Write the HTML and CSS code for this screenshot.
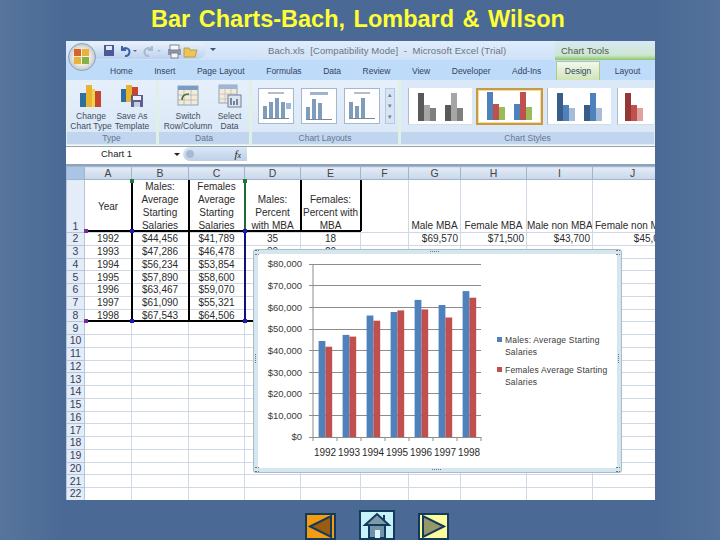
FILE: index.html
```html
<!DOCTYPE html>
<html lang="en">
<head>
    <meta charset="UTF-8">
    <meta name="viewport" content="width=device-width, initial-scale=1.0">
    <title>Bar Charts-Bach, Lombard &amp; Wilson</title>
    <link rel="stylesheet" href="styles.css">
</head>
<body>
    <h1 class="slide-title">Bar Charts-Bach, Lombard &amp; Wilson</h1>

    <div class="excel">
        <!-- title bar -->
        <div class="titlebar">
            <div class="office-btn">
                <svg width="18" height="18" viewBox="0 0 18 18">
                    <rect x="1" y="1" width="7" height="7" fill="#d9622b"/>
                    <rect x="9" y="1" width="7" height="7" fill="#e9b23c"/>
                    <rect x="1" y="9" width="7" height="7" fill="#e9b23c"/>
                    <rect x="9" y="9" width="7" height="7" fill="#86b04a"/>
                </svg>
            </div>
            <div class="qat">
                <svg width="100" height="16" viewBox="0 0 100 16">
                    <rect x="4" y="2" width="10" height="11" fill="#4a5a94"/>
                    <rect x="6" y="3" width="6" height="4" fill="#dfe6f5"/>
                    <path d="M22 7 a4 4 0 1 1 3 6 M22 3 v4 h4" fill="none" stroke="#3b62a8" stroke-width="2"/>
                    <path d="M33 7 h4 l-2 2 z" fill="#5a6a85"/>
                    <path d="M52 7 a4 4 0 1 0 -3 6 M52 3 v4 h-4" fill="none" stroke="#a9bad0" stroke-width="2"/>
                    <path d="M57 7 h4 l-2 2 z" fill="#a9bad0"/>
                    <rect x="68" y="6" width="13" height="6" fill="#8f98a6"/>
                    <rect x="70" y="2" width="9" height="5" fill="#f4f6fa" stroke="#69717f" stroke-width=".8"/>
                    <rect x="71" y="10" width="7" height="5" fill="#f4f6fa" stroke="#69717f" stroke-width=".8"/>
                    <path d="M84 5 h5 l1 2 h7 l-2 7 h-11 z" fill="#ecc55a" stroke="#b68f30" stroke-width=".8"/>
                </svg>
            </div>
            <span class="qat-more"></span>
            <span class="doc-name">Bach.xls&nbsp; [Compatibility Mode]&nbsp; -&nbsp; Microsoft Excel (Trial)</span>
            <span class="chart-tools">Chart Tools</span>
        </div>

        <!-- tabs -->
        <div class="tabs">
            <span>Home</span>
            <span>Insert</span>
            <span>Page Layout</span>
            <span>Formulas</span>
            <span>Data</span>
            <span>Review</span>
            <span>View</span>
            <span>Developer</span>
            <span>Add-Ins</span>
            <span class="tab-active">Design</span>
            <span>Layout</span>
        </div>

        <!-- ribbon -->
        <div class="ribbon">
            <section class="group group-type">
                <div class="group-body">
                    <div class="tool">
                        <svg width="24" height="24" viewBox="0 0 24 24">
                            <rect x="1" y="9" width="6" height="14" fill="#2f6f9e"/>
                            <rect x="7" y="1" width="6" height="22" fill="#e8b32f"/>
                            <rect x="13" y="5" width="3" height="18" fill="#f0d34a"/>
                            <rect x="16" y="7" width="6" height="16" fill="#c5452e"/>
                        </svg>
                        <span>Change<br>Chart Type</span>
                    </div>
                    <div class="tool">
                        <svg width="24" height="24" viewBox="0 0 24 24">
                            <rect x="1" y="5" width="5" height="13" fill="#2f6f9e"/>
                            <rect x="6" y="1" width="6" height="17" fill="#e8b32f"/>
                            <rect x="12" y="3" width="6" height="15" fill="#c5452e"/>
                            <rect x="11" y="11" width="12" height="12" fill="#5b5f93"/>
                            <rect x="13" y="12" width="8" height="4" fill="#eef1f8"/>
                            <rect x="14" y="18" width="6" height="5" fill="#c9cde0"/>
                        </svg>
                        <span>Save As<br>Template</span>
                    </div>
                </div>
                <div class="group-label">Type</div>
            </section>
            <section class="group group-data">
                <div class="group-body data-body">
                    <div class="tool tool-wide">
                        <svg width="24" height="24" viewBox="0 0 24 24">
                            <rect x="2" y="2" width="20" height="19" fill="#f6ead2" stroke="#8fa3bd"/>
                            <rect x="2" y="2" width="20" height="4" fill="#7c9cc6"/>
                            <path d="M2 11 h20 M2 16 h20 M8 6 v15 M15 6 v15" stroke="#a9b7c8" stroke-width=".8"/>
                            <path d="M6 16 q0 -6 7 -6" fill="none" stroke="#3f6b3a" stroke-width="1.6"/>
                        </svg>
                        <span>Switch<br>Row/Column</span>
                    </div>
                    <div class="tool">
                        <svg width="24" height="24" viewBox="0 0 24 24">
                            <rect x="1" y="1" width="18" height="18" fill="#f6ead2" stroke="#8fa3bd"/>
                            <rect x="1" y="1" width="18" height="4" fill="#9db6d8"/>
                            <path d="M1 10 h18 M1 15 h18 M7 5 v14 M13 5 v14" stroke="#b4c0cf" stroke-width=".8"/>
                            <rect x="10" y="11" width="13" height="12" fill="#dbe5f1" stroke="#6f7f95"/>
                            <path d="M13 21 v-7 M16 21 v-4 M19 21 v-6" stroke="#44546a" stroke-width="1.3"/>
                        </svg>
                        <span>Select<br>Data</span>
                    </div>
                </div>
                <div class="group-label">Data</div>
            </section>
            <section class="group group-layouts">
                <div class="group-body layouts-body">
                    <div class="layout-thumb">
                        <i class="lt-title"></i>
                        <div class="lt-bars"><b class="h1"></b><b class="h2"></b><b class="h3"></b><b class="h2"></b></div>
                        <i class="lt-key"></i>
                    </div>
                    <div class="layout-thumb">
                        <i class="lt-title lt-title-box"></i>
                        <div class="lt-bars"><b class="h1"></b><b class="h3"></b><b class="h2"></b></div>
                    </div>
                    <div class="layout-thumb">
                        <i class="lt-title"></i>
                        <div class="lt-bars"><b class="h2"></b><b class="h1"></b><b class="h3"></b></div>
                    </div>
                    <div class="scroller"><i>&#9652;</i><i>&#9662;</i><i>&#9662;</i></div>
                </div>
                <div class="group-label">Chart Layouts</div>
            </section>
            <section class="group group-styles">
                <div class="group-body styles-body">
                    <div class="style-thumb">
                        <div class="cluster"><b class="tall c-g1"></b><b class="mid c-g2"></b><b class="low c-g3"></b></div>
                        <div class="cluster"><b class="mid c-g1"></b><b class="tall c-g2"></b><b class="low c-g3"></b></div>
                    </div>
                    <div class="style-thumb style-picked">
                        <div class="cluster"><b class="tall c-b"></b><b class="mid c-r"></b><b class="low c-n"></b></div>
                        <div class="cluster"><b class="mid c-b"></b><b class="tall c-r"></b><b class="low c-n"></b></div>
                    </div>
                    <div class="style-thumb">
                        <div class="cluster"><b class="tall c-b1"></b><b class="mid c-b2"></b><b class="low c-b3"></b></div>
                        <div class="cluster"><b class="mid c-b1"></b><b class="tall c-b2"></b><b class="low c-b3"></b></div>
                    </div>
                    <div class="style-thumb style-cut">
                        <div class="cluster"><b class="tall c-r1"></b><b class="mid c-r2"></b><b class="low c-r3"></b></div>
                    </div>
                </div>
                <div class="group-label">Chart Styles</div>
            </section>
        </div>

        <!-- name box and formula bar -->
        <div class="formula-bar">
            <div class="name-box">Chart 1<span class="caret"></span></div>
            <div class="fx-box"><i class="fx-knob"></i><em>f<small>x</small></em></div>
        </div>

        <!-- worksheet -->
        <div class="sheet">
            <table class="grid">
                <colgroup>
                    <col class="w-head"><col class="w-a"><col class="w-b"><col class="w-c"><col class="w-d"><col class="w-e">
                    <col class="w-f"><col class="w-g"><col class="w-h"><col class="w-i"><col class="w-j">
                </colgroup>
                <thead>
                    <tr>
                        <th class="corner"></th><th>A</th><th>B</th><th>C</th><th>D</th><th>E</th><th>F</th><th>G</th><th>H</th><th>I</th><th>J</th>
                    </tr>
                </thead>
                <tbody>
                    <tr class="row-tall">
                        <th class="row-num">1</th>
                        <td class="year-head">Year</td>
                        <td class="wrap">Males:<br>Average<br>Starting<br>Salaries</td>
                        <td class="wrap">Females<br>Average<br>Starting<br>Salaries</td>
                        <td class="wrap">Males:<br>Percent<br>with MBA</td>
                        <td class="wrap">Females:<br>Percent with<br>MBA</td>
                        <td></td>
                        <td class="wrap">Male MBA</td>
                        <td class="wrap">Female MBA</td>
                        <td class="wrap">Male non MBA</td>
                        <td class="wrap spill">Female non MBA</td>
                    </tr>
                    <tr><th class="row-num">2</th><td>1992</td><td>$44,456</td><td>$41,789</td><td>35</td><td>18</td><td></td><td class="money">$69,570</td><td class="money">$71,500</td><td class="money">$43,700</td><td class="money">$45,000</td></tr>
                    <tr><th class="row-num">3</th><td>1993</td><td>$47,286</td><td>$46,478</td><td>39</td><td>20</td><td></td><td></td><td></td><td></td><td></td></tr>
                    <tr><th class="row-num">4</th><td>1994</td><td>$56,234</td><td>$53,854</td><td></td><td></td><td></td><td></td><td></td><td></td><td></td></tr>
                    <tr><th class="row-num">5</th><td>1995</td><td>$57,890</td><td>$58,600</td><td></td><td></td><td></td><td></td><td></td><td></td><td></td></tr>
                    <tr><th class="row-num">6</th><td>1996</td><td>$63,467</td><td>$59,070</td><td></td><td></td><td></td><td></td><td></td><td></td><td></td></tr>
                    <tr><th class="row-num">7</th><td>1997</td><td>$61,090</td><td>$55,321</td><td></td><td></td><td></td><td></td><td></td><td></td><td></td></tr>
                    <tr><th class="row-num">8</th><td>1998</td><td>$67,543</td><td>$64,506</td><td></td><td></td><td></td><td></td><td></td><td></td><td></td></tr>
                    <tr><th class="row-num">9</th><td></td><td></td><td></td><td></td><td></td><td></td><td></td><td></td><td></td><td></td></tr>
                    <tr><th class="row-num">10</th><td></td><td></td><td></td><td></td><td></td><td></td><td></td><td></td><td></td><td></td></tr>
                    <tr><th class="row-num">11</th><td></td><td></td><td></td><td></td><td></td><td></td><td></td><td></td><td></td><td></td></tr>
                    <tr><th class="row-num">12</th><td></td><td></td><td></td><td></td><td></td><td></td><td></td><td></td><td></td><td></td></tr>
                    <tr><th class="row-num">13</th><td></td><td></td><td></td><td></td><td></td><td></td><td></td><td></td><td></td><td></td></tr>
                    <tr><th class="row-num">14</th><td></td><td></td><td></td><td></td><td></td><td></td><td></td><td></td><td></td><td></td></tr>
                    <tr><th class="row-num">15</th><td></td><td></td><td></td><td></td><td></td><td></td><td></td><td></td><td></td><td></td></tr>
                    <tr><th class="row-num">16</th><td></td><td></td><td></td><td></td><td></td><td></td><td></td><td></td><td></td><td></td></tr>
                    <tr><th class="row-num">17</th><td></td><td></td><td></td><td></td><td></td><td></td><td></td><td></td><td></td><td></td></tr>
                    <tr><th class="row-num">18</th><td></td><td></td><td></td><td></td><td></td><td></td><td></td><td></td><td></td><td></td></tr>
                    <tr><th class="row-num">19</th><td></td><td></td><td></td><td></td><td></td><td></td><td></td><td></td><td></td><td></td></tr>
                    <tr><th class="row-num">20</th><td></td><td></td><td></td><td></td><td></td><td></td><td></td><td></td><td></td><td></td></tr>
                    <tr><th class="row-num">21</th><td></td><td></td><td></td><td></td><td></td><td></td><td></td><td></td><td></td><td></td></tr>
                    <tr><th class="row-num">22</th><td></td><td></td><td></td><td></td><td></td><td></td><td></td><td></td><td></td><td></td></tr>
                </tbody>
            </table>

            <!-- selected ranges drawn over the cells -->
            <i class="line h row1-line"></i>
            <i class="line h row8-line"></i>
            <i class="line v col-b"></i>
            <i class="line v col-c"></i>
            <i class="line v col-d-top"></i>
            <i class="line v col-d-low"></i>
            <i class="line v col-e"></i>
            <i class="line v col-f"></i>
            <i class="handle purple hd-a2"></i>
            <i class="handle purple hd-a8"></i>
            <i class="handle navy hd-b2"></i>
            <i class="handle navy hd-b8"></i>
            <i class="handle navy hd-d2"></i>
            <i class="handle navy hd-d8"></i>
            <i class="handle green hd-b1"></i>
            <i class="handle green hd-d1"></i>

            <!-- embedded chart -->
            <div class="chart">
                <i class="grip grip-top"></i>
                <i class="grip grip-bottom"></i>
                <i class="grip grip-left"></i>
                <i class="grip grip-right"></i>
                <i class="grip grip-tl"></i>
                <i class="grip grip-tr"></i>
                <i class="grip grip-bl"></i>
                <i class="grip grip-br"></i>
                <svg class="chart-svg" viewBox="5 2 359 214" width="359" height="214">
                    <g stroke="#8c8c8c" stroke-width="1">
                        <path d="M60 12 V185"/>
                        <path d="M56 12.5 H228 M56 33.5 H228 M56 55.5 H228 M56 77.5 H228 M56 98.5 H228 M56 120.5 H228 M56 141.5 H228 M56 163.5 H228 M56 185.5 H228"/>
                        <path d="M60 185 v4 M84 185 v4 M108 185 v4 M132 185 v4 M156 185 v4 M180 185 v4 M204 185 v4 M228 185 v4"/>
                    </g>
                    <g class="bars-male" fill="#4f81bd">
                        <rect x="65.6" y="89" width="6.8" height="96"/>
                        <rect x="89.6" y="82.9" width="6.8" height="102.1"/>
                        <rect x="113.6" y="63.5" width="6.8" height="121.5"/>
                        <rect x="137.6" y="60" width="6.8" height="125"/>
                        <rect x="161.6" y="47.9" width="6.8" height="137.1"/>
                        <rect x="185.6" y="53" width="6.8" height="132"/>
                        <rect x="209.6" y="39.1" width="6.8" height="145.9"/>
                    </g>
                    <g class="bars-female" fill="#c0504d">
                        <rect x="72.4" y="94.7" width="6.8" height="90.3"/>
                        <rect x="96.4" y="84.6" width="6.8" height="100.4"/>
                        <rect x="120.4" y="68.7" width="6.8" height="116.3"/>
                        <rect x="144.4" y="58.4" width="6.8" height="126.6"/>
                        <rect x="168.4" y="57.4" width="6.8" height="127.6"/>
                        <rect x="192.4" y="65.5" width="6.8" height="119.5"/>
                        <rect x="216.4" y="45.7" width="6.8" height="139.3"/>
                    </g>
                    <g class="axis-y" text-anchor="end">
                        <text x="49" y="15">$80,000</text>
                        <text x="49" y="37">$70,000</text>
                        <text x="49" y="59">$60,000</text>
                        <text x="49" y="80">$50,000</text>
                        <text x="49" y="102">$40,000</text>
                        <text x="49" y="124">$30,000</text>
                        <text x="49" y="145">$20,000</text>
                        <text x="49" y="167">$10,000</text>
                        <text x="49" y="188">$0</text>
                    </g>
                    <g class="axis-x" text-anchor="middle">
                        <text x="72" y="204">1992</text>
                        <text x="96" y="204">1993</text>
                        <text x="120" y="204">1994</text>
                        <text x="144" y="204">1995</text>
                        <text x="168" y="204">1996</text>
                        <text x="192" y="204">1997</text>
                        <text x="216" y="204">1998</text>
                    </g>
                    <g class="legend">
                        <rect x="244" y="85" width="5" height="5" fill="#4f81bd"/>
                        <text x="252" y="91">Males: Average Starting</text>
                        <text x="252" y="103">Salaries</text>
                        <rect x="244" y="115" width="5" height="5" fill="#c0504d"/>
                        <text x="252" y="121">Females Average Starting</text>
                        <text x="252" y="133">Salaries</text>
                    </g>
                </svg>
            </div>
        </div>
    </div>

    <!-- slide navigation -->
    <nav class="slide-nav">
        <svg class="nav-btn" width="31" height="27" viewBox="0 0 31 27">
            <rect x="1" y="1" width="29" height="25" fill="#f59b12" stroke="#123a5c" stroke-width="2"/>
            <path d="M5 13.5 L26 3 V24 Z" fill="#9a5c10" stroke="#123a5c" stroke-width="2"/>
        </svg>
        <svg class="nav-btn" width="36" height="30" viewBox="0 0 36 30">
            <rect x="1" y="1" width="34" height="28" fill="#c8f2fb" stroke="#123a5c" stroke-width="2"/>
            <path d="M6 15 L18 4 L30 15 Z" fill="#7f9aa6" stroke="#123a5c" stroke-width="2"/>
            <rect x="24" y="5" width="2" height="5" fill="#123a5c"/>
            <path d="M10 15 H26 V28 H10 Z" fill="#6f94a8" stroke="#123a5c" stroke-width="2"/>
            <rect x="16" y="20" width="5" height="8" fill="#dff5fb"/>
        </svg>
        <svg class="nav-btn" width="31" height="27" viewBox="0 0 31 27">
            <rect x="1" y="1" width="29" height="25" fill="#fdfb9c" stroke="#123a5c" stroke-width="2"/>
            <path d="M26 13.5 L5 3 V24 Z" fill="#94986a" stroke="#123a5c" stroke-width="2"/>
        </svg>
    </nav>
</body>
</html>
```

FILE: styles.css
```css
html, body {
    margin: 0;
    height: 100%;
}
body {
    width: 720px;
    height: 540px;
    overflow: hidden;
    background: linear-gradient(90deg, rgba(255, 255, 255, .07), transparent 9%, transparent 91%, rgba(255, 255, 255, .05)), #4a6a95;
    font-family: "Liberation Sans", Arial, sans-serif;
}
.slide-title {
    margin: 0;
    height: 41px;
    line-height: 39px;
    padding-right: 4px;
    text-align: center;
    font-size: 23.5px;
    font-weight: bold;
    color: #ffff33;
    word-spacing: 2px;
}

/* excel window */
.excel {
    width: 589px;
    height: 459px;
    margin-left: 66px;
    background: #fff;
    color: #222;
    overflow: hidden;
}
.titlebar {
    display: flex;
    align-items: center;
    position: relative;
    height: 19px;
    background: linear-gradient(#dfedfc, #cfe1f7);
    font-size: 9.5px;
    color: #6b7483;
}
.office-btn {
    position: absolute;
    left: 2px;
    top: 2px;
    width: 28px;
    height: 28px;
    display: flex;
    align-items: center;
    justify-content: center;
    border-radius: 50%;
    background: radial-gradient(circle, #f5efe0 40%, #b8c2cf 80%, #8a97a8);
    border: 1px solid #8ea0b8;
    box-sizing: border-box;
    z-index: 2;
}
.qat {
    display: flex;
    align-items: center;
    height: 17px;
    margin-left: 24px;
    padding-left: 10px;
    padding-right: 6px;
    border-radius: 0 9px 9px 0;
    background: linear-gradient(#e9f1fb, #bcd2ee);
}
.qat-more {
    width: 0;
    height: 0;
    margin-left: 4px;
    border: 3px solid transparent;
    border-top-color: #44546a;
}
.doc-name {
    margin-left: 52px;
    white-space: nowrap;
    letter-spacing: .1px;
}
.chart-tools {
    position: absolute;
    left: 489px;
    top: 0;
    right: 0;
    height: 19px;
    padding-left: 6px;
    line-height: 19px;
    color: #4d5a4d;
    background: linear-gradient(#d8e9f6, #cde6cf 75%, #8fc46d);
}
.tabs {
    display: flex;
    align-items: flex-end;
    gap: 21.5px;
    height: 20px;
    padding-left: 44px;
    background: #bfdbfa;
    font-size: 8.5px;
    color: #33445c;
    white-space: nowrap;
}
.tabs span {
    line-height: 18px;
}
.tab-active {
    margin: 0 -7px;
    padding: 0 8px;
    border: 1px solid #a9c98f;
    border-bottom: 0;
    background: linear-gradient(#f2f8ec, #cfe5b8);
}

/* ribbon groups */
.ribbon {
    display: flex;
    gap: 3px;
    height: 64px;
    padding: 0 0 1px 1px;
    background: #e0f0e4;
    border-bottom: 1px solid #f4f8fd;
    font-size: 8.5px;
    color: #3f4d61;
}
.group {
    display: flex;
    flex-direction: column;
    border-radius: 3px;
    background: #dbe8f7;
}
.group-type { width: 89px; }
.group-data { width: 90px; }
.group-layouts { width: 146px; }
.group-styles { width: 253px; }
.group-body {
    flex: 1;
    display: flex;
    justify-content: center;
    gap: 1px;
    padding-top: 4px;
    background: linear-gradient(#e6f0fb, #dbe8f7);
}
.data-body {
    justify-content: flex-start;
    gap: 0;
    padding-left: 7px;
}
.group-label {
    height: 12px;
    line-height: 12px;
    text-align: center;
    font-size: 8.5px;
    color: #66758c;
    background: #c2d5ee;
}
.tool {
    width: 40px;
    display: flex;
    flex-direction: column;
    align-items: center;
    text-align: center;
    line-height: 10px;
    white-space: nowrap;
}
.tool svg {
    margin-bottom: 3px;
}
.tool-wide {
    width: 44px;
}
.layouts-body {
    justify-content: flex-start;
    gap: 7px;
    padding: 8px 0 4px 6px;
}
.layout-thumb {
    box-sizing: border-box;
    width: 36px;
    height: 36px;
    position: relative;
    padding: 3px 4px;
    border: 1px solid #a5b7ce;
    background: #fff;
}
.lt-title {
    display: block;
    width: 60%;
    height: 2px;
    margin: 0 auto 4px;
    background: #b6bdc7;
}
.lt-title-box {
    height: 3px;
    width: 70%;
    background: #9fb4cf;
}
.lt-bars {
    display: flex;
    align-items: flex-end;
    gap: 2px;
    height: 20px;
    border-bottom: 1px solid #7a8797;
}
.lt-bars b {
    width: 4px;
    background: #7f9cbd;
}
.lt-bars .h1 { height: 60%; }
.lt-bars .h2 { height: 80%; }
.lt-bars .h3 { height: 100%; }
.lt-key {
    position: absolute;
    right: 2px;
    top: 14px;
    width: 5px;
    height: 6px;
    background: #9fb8d6;
}
.scroller {
    display: flex;
    flex-direction: column;
    width: 10px;
    margin-left: -2px;
    height: 36px;
    border: 1px solid #b6c8df;
    box-sizing: border-box;
    background: #d6e4f5;
    font-size: 7px;
    line-height: 11px;
    text-align: center;
    color: #6d7f97;
}
.scroller i {
    font-style: normal;
}

/* chart style gallery */
.styles-body {
    justify-content: flex-start;
    gap: 4px;
    padding: 8px 0 4px 7px;
    box-sizing: border-box;
    background: #dbe8f7;
}
.style-thumb {
    box-sizing: border-box;
    display: flex;
    justify-content: space-around;
    align-items: flex-end;
    width: 64px;
    height: 37px;
    padding: 0 4px 3px;
    background: #fff;
    border-left: 1px solid #b0bdcc;
    border-bottom: 1px solid #d4dce6;
}
.style-picked {
    width: 68px;
    border: 2px solid #c99a45;
    box-shadow: inset 0 0 0 1px #f7dd9a;
}
.style-cut {
    width: 37px;
    margin-left: 2px;
    justify-content: flex-start;
    padding-left: 7px;
}
.cluster {
    display: flex;
    align-items: flex-end;
}
.cluster b {
    width: 6px;
}
.cluster .tall { height: 28px; }
.cluster .mid { height: 16px; }
.cluster .low { height: 13px; }
.c-g1 { background: #595959; }
.c-g2 { background: #a6a6a6; }
.c-g3 { background: #7f7f7f; }
.c-b { background: #4f81bd; }
.c-r { background: #c0504d; }
.c-n { background: #9bbb59; }
.c-b1 { background: #385d8a; }
.c-b2 { background: #4f81bd; }
.c-b3 { background: #a7bcd9; }
.c-r1 { background: #953735; }
.c-r2 { background: #c0504d; }
.c-r3 { background: #e0a09e; }

/* name box and formula bar */
.formula-bar {
    display: flex;
    height: 20px;
    padding-bottom: 3px;
    background: #fff;
    border-top: 1px solid #8fa2b8;
    border-bottom: 2px solid #8fa2b8;
    box-sizing: border-box;
    font-size: 9.5px;
}
.name-box {
    width: 115px;
    position: relative;
    padding-left: 35px;
    box-sizing: border-box;
    line-height: 14px;
}
.caret {
    position: absolute;
    right: 1px;
    top: 6px;
    border: 3px solid transparent;
    border-top-color: #222;
}
.fx-box {
    display: flex;
    align-items: center;
    justify-content: space-between;
    width: 64px;
    margin-left: 2px;
    padding: 0 6px 0 3px;
    box-sizing: border-box;
    background: linear-gradient(#dbe7f6, #bdd0e8);
    border-radius: 8px 0 0 8px;
}
.fx-knob {
    width: 8px;
    height: 8px;
    border-radius: 50%;
    background: #a9bad0;
}
.fx-box em {
    font-family: "Liberation Serif", serif;
    font-size: 11px;
}
.fx-box small {
    font-size: 8px;
}

/* worksheet */
.sheet {
    position: relative;
    height: 334px;
    overflow: hidden;
    background: #fff;
    font-size: 10px;
}
.grid {
    border-collapse: collapse;
    table-layout: fixed;
    width: 606px;
}
.w-head { width: 18px; }
.w-a { width: 47px; }
.w-b { width: 57px; }
.w-c { width: 56px; }
.w-d { width: 56px; }
.w-e { width: 60px; }
.w-f { width: 48px; }
.w-g { width: 52px; }
.w-h { width: 66px; }
.w-i { width: 66px; }
.w-j { width: 80px; }
.grid th, .grid td {
    box-sizing: border-box;
    padding: 0;
    border: 1px solid #d0d7e5;
    line-height: 11px;
    height: 12.75px;
    text-align: center;
    font-weight: normal;
    color: #2b2b2b;
    white-space: nowrap;
    overflow: hidden;
}
.grid thead th {
    height: 13px;
    background: linear-gradient(#e3ebf6, #c9d7ea);
    border-color: #9eb6ce;
    font-size: 10.5px;
    color: #444;
}
.grid .corner {
    background: #a9c4e4;
}
.grid .row-num {
    background: #e4ecf7;
    border-color: #b6c6da;
    font-size: 10.5px;
    color: #34405a;
}
.row-tall > * {
    height: 51px !important;
    vertical-align: bottom;
}
.grid .wrap {
    line-height: 13px;
}
.grid .year-head {
    vertical-align: middle;
}
.grid .money {
    text-align: right;
    padding-right: 2px;
}
.grid .spill {
    text-align: left;
    padding-left: 2px;
}

/* range outlines */
.line {
    position: absolute;
    background: #000;
}
.line.h { height: 1.5px; }
.line.v { width: 1.5px; }
.row1-line { left: 19px; width: 276px; top: 64px; }
.row8-line { left: 19px; width: 170px; top: 154px; }
.col-b { left: 65px; top: 14px; height: 141px; }
.col-c { left: 122px; top: 14px; height: 141px; }
.col-d-top { left: 178px; top: 14px; height: 51px; background: #1f6b35; }
.col-d-low { left: 178px; top: 65px; height: 90px; background: #10107f; }
.col-e { left: 234px; top: 14px; height: 51px; }
.col-f { left: 294px; top: 14px; height: 51px; }
.handle {
    position: absolute;
    width: 4px;
    height: 4px;
}
.purple { background: #7a2b9e; }
.navy { background: #1a1ac0; }
.green { background: #1f7a3a; }
.hd-a2 { left: 18px; top: 63px; }
.hd-a8 { left: 18px; top: 153px; }
.hd-b2 { left: 64px; top: 63px; }
.hd-b8 { left: 64px; top: 153px; }
.hd-d2 { left: 177px; top: 63px; }
.hd-d8 { left: 177px; top: 153px; }
.hd-b1 { left: 64px; top: 13px; }
.hd-d1 { left: 177px; top: 13px; }

/* chart object over the cells */
.chart {
    position: absolute;
    left: 187px;
    top: 83px;
    width: 369px;
    height: 224px;
    box-sizing: border-box;
    background: #fff;
    border: 5px solid #d4e6ef;
    outline: 1px solid #a9bcc8;
    outline-offset: -1px;
    border-radius: 3px;
}
.chart-svg {
    display: block;
    font-family: "Liberation Sans", Arial, sans-serif;
}
.axis-y text {
    font-size: 9.5px;
    fill: #3a3a3a;
}
.axis-x text {
    font-size: 10px;
    fill: #2b2b2b;
}
.legend text {
    font-size: 8.5px;
    letter-spacing: .2px;
    fill: #3a3a3a;
}
/* dotted sizing grips on the frame */
.grip {
    position: absolute;
    width: 9px;
    height: 1px;
    border-top: 1px dotted #66778a;
}
.grip-top { left: 172px; top: -3px; }
.grip-bottom { left: 174px; bottom: -3px; }
.grip-left, .grip-right {
    width: 1px;
    height: 9px;
    top: 100px;
    border-top: 0;
    border-left: 1px dotted #66778a;
}
.grip-left { left: -3px; }
.grip-right { right: -3px; }
.grip-tl, .grip-tr, .grip-bl, .grip-br {
    width: 4px;
    height: 3px;
    border-bottom: 1px dotted #66778a;
}
.grip-tl { left: -3px; top: -4px; }
.grip-tr { right: -3px; top: -4px; }
.grip-bl { left: -3px; bottom: -4px; }
.grip-br { right: -3px; bottom: -4px; }

/* prev / home / next buttons */
.slide-nav {
    display: flex;
    align-items: flex-start;
    gap: 23px;
    padding: 10px 0 0 305px;
}
.nav-btn {
    display: block;
    margin-top: 3px;
}
.nav-btn:nth-child(2) {
    margin-top: 0;
}
```
